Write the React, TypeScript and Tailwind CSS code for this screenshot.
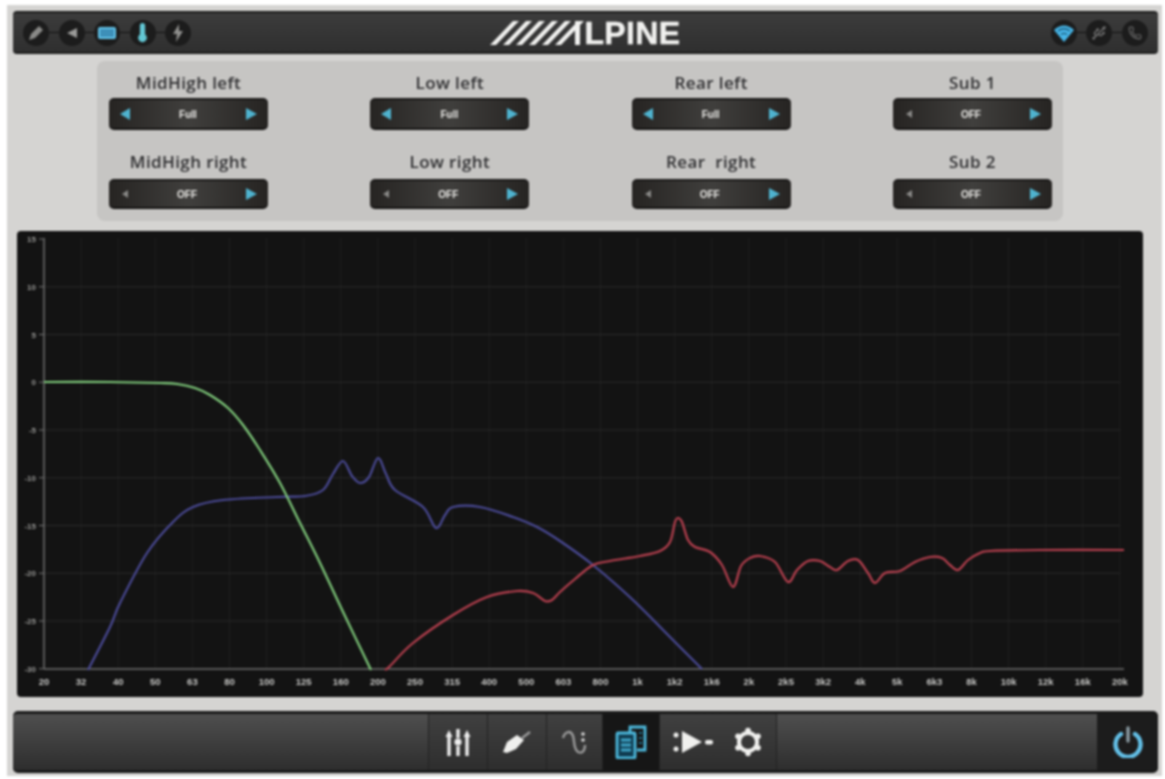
import { Phone, Thermometer, Usb } from "lucide-react"

type Pt = [number, number]

const FONT = "font-['Liberation_Sans',Arial,sans-serif]"

const channels = [
  [
    { label: "MidHigh left", value: "Full", on: true },
    { label: "MidHigh right", value: "OFF", on: false },
  ],
  [
    { label: "Low left", value: "Full", on: true },
    { label: "Low right", value: "OFF", on: false },
  ],
  [
    { label: "Rear left", value: "Full", on: true },
    { label: "Rear  right", value: "OFF", on: false },
  ],
  [
    { label: "Sub 1", value: "OFF", on: false },
    { label: "Sub 2", value: "OFF", on: false },
  ],
]

const freqs = "20 32 40 50 63 80 100 125 160 200 250 315 400 500 603 800 1k 1k2 1k6 2k 2k5 3k2 4k 5k 6k3 8k 10k 12k 16k 20k".split(" ")
const dbs = ["15", "10", "5", "0", "-5", "-10", "-15", "-20", "-25", "-30"]

// curve points, in page pixels
const green: Pt[] = [[44, 382], [110, 382], [160, 383], [177, 384], [195, 388], [210, 395], [228, 408], [243, 425], [260, 450], [280, 483], [300, 523], [320, 563], [345, 616], [371, 670]]
const blue: Pt[] = [[88, 670], [110, 627], [120, 603], [147, 553], [173, 522], [193, 507], [223, 500], [277, 497], [305, 496], [323, 490], [333, 474], [343, 461], [352, 476], [360, 483], [369, 477], [378, 458], [386, 474], [395, 490], [423, 507], [436, 528], [445, 515], [453, 507], [480, 507], [513, 517], [537, 527], [560, 541], [593, 565], [633, 600], [670, 637], [702, 669]]
const red: Pt[] = [[385, 670], [390, 666], [413, 643], [453, 615], [487, 597], [517, 591], [533, 593], [545, 601], [552, 600], [560, 592], [575, 579], [593, 565], [610, 561], [640, 556], [660, 551], [670, 542], [675, 522], [678, 518], [682, 522], [688, 540], [695, 547], [710, 552], [722, 565], [733, 587], [741, 566], [750, 558], [760, 556], [775, 562], [788, 582], [797, 570], [808, 561], [820, 561], [830, 567], [837, 570], [848, 561], [858, 560], [868, 573], [875, 583], [885, 573], [900, 571], [915, 562], [930, 557], [942, 558], [950, 565], [958, 570], [968, 560], [980, 553], [990, 551], [1040, 550], [1124, 550]]

function smooth(p: Pt[]) {
  let d = `M${p[0][0]} ${p[0][1]}`
  for (let i = 0; i < p.length - 1; i++) {
    const a = p[i - 1] ?? p[i]
    const b = p[i]
    const c = p[i + 1]
    const e = p[i + 2] ?? c
    d += `C${b[0] + (c[0] - a[0]) / 6} ${b[1] + (c[1] - a[1]) / 6} ${c[0] - (e[0] - b[0]) / 6} ${c[1] - (e[1] - b[1]) / 6} ${c[0]} ${c[1]}`
  }
  return d
}

function Selector({ value, on, tall }: { value: string; on: boolean; tall: boolean }) {
  return (
    <div
      className={`flex w-[159px] items-center justify-between rounded-[5px] border-b-2 border-t-2 border-b-[#141312] border-t-[#1a1918] bg-gradient-to-r from-[#262422] via-[#403f3d] to-[#262422] px-[11px] ${tall ? "h-[32px]" : "h-[30px]"}`}
    >
      {on ? (
        <div className="h-0 w-0 border-y-[6px] border-r-[10px] border-y-transparent border-r-[#4fb3cf]" />
      ) : (
        <div className="ml-[2px] h-0 w-0 border-y-[4px] border-r-[6px] border-y-transparent border-r-[#8a8a88]" />
      )}
      <span className={`${FONT} text-[10px] font-bold text-[#ecebe8]`}>{value}</span>
      <div className="h-0 w-0 border-y-[6px] border-l-[11px] border-y-transparent border-l-[#4fb3cf]" />
    </div>
  )
}

function Channel({ items }: { items: { label: string; value: string; on: boolean }[] }) {
  return (
    <div className="flex w-[159px] flex-col items-center">
      <div className="mb-[5px] h-[20px] whitespace-pre font-['Open_Sans',sans-serif] text-[17px] font-semibold leading-[20px] tracking-[0.4px] text-[#2f2f31]">
        {items[0].label}
      </div>
      <Selector value={items[0].value} on={items[0].on} tall />
      <div className="mb-[7px] mt-[22px] h-[20px] whitespace-pre font-['Open_Sans',sans-serif] text-[17px] font-semibold leading-[20px] tracking-[0.4px] text-[#2f2f31]">
        {items[1].label}
      </div>
      <Selector value={items[1].value} on={items[1].on} tall={false} />
    </div>
  )
}

function Dot({ children, first }: { children: React.ReactNode; first?: boolean }) {
  return (
    <>
      {!first && <div className="h-[1px] w-[9.5px] bg-[#111]" />}
      <div className="flex h-[26px] w-[26px] items-center justify-center rounded-full bg-[#1c1c1c]">{children}</div>
    </>
  )
}

function Logo() {
  return (
    <div className="flex items-center">
      <svg width="94" height="25" viewBox="0 0 94 25">
        {[0, 13, 26, 39, 52, 65].map((x) => (
          <polygon key={x} points={`${x},25 ${x + 6},25 ${x + 29},1 ${x + 23},1`} fill="#f1f1ef" />
        ))}
        <polygon points="85,1 90,1 90,25 85,25" fill="#f1f1ef" />
      </svg>
      <span className={`${FONT} text-[32px] font-bold leading-[26px] tracking-[0.4px] text-[#f1f1ef] [-webkit-text-stroke:0.5px_#f1f1ef]`}>LPINE</span>
    </div>
  )
}

function TopBar() {
  return (
    <div className="flex h-[43px] items-center justify-between rounded-[4px] border-y-2 border-b-[#1c1c1c] border-t-[#1c1c1c] bg-gradient-to-b from-[#3c3c3c] to-[#2f2f2f] pl-[10px] pr-[10px]">
      <div className="flex w-[400px] items-center">
        <Dot first>
          <svg width="18" height="18" viewBox="0 0 18 18">
            <path d="M2 16l2-6 8-8 4 4-8 8z" fill="#8a8a88" />
          </svg>
        </Dot>
        <Dot>
          <svg width="14" height="14" viewBox="0 0 14 14">
            <path d="M2 7l10-5v10z" fill="#9a9a98" />
          </svg>
        </Dot>
        <Dot>
          <div className="h-[12px] w-[18px] rounded-[2px] border-2 border-[#63c4ea] bg-[#3d8fb8]" />
        </Dot>
        <Dot>
          <Thermometer size={21} className="text-[#63c7d4]" fill="#63c7d4" />
        </Dot>
        <Dot>
          <svg width="12" height="18" viewBox="0 0 12 18">
            <path d="M7 0L1 10h4l-1 8 7-11H7z" fill="#8f8f8d" />
          </svg>
        </Dot>
      </div>
      <Logo />
      <div className="flex w-[400px] items-center justify-end">
        <Dot first>
          <svg width="22" height="18" viewBox="0 0 22 18">
            <path d="M1 6c6-6 14-6 20 0l-10 12z" fill="#46b4e6" />
            <path d="M5 7c4-3 8-3 12 0M8 10.500c2-1.500 4-1.500 6 0" fill="none" stroke="#1c5a7a" strokeWidth="1.4" />
          </svg>
        </Dot>
        <Dot>
          <Usb size={16} className="text-[#777]" />
        </Dot>
        <Dot>
          <Phone size={14} className="text-[#666]" />
        </Dot>
      </div>
    </div>
  )
}

function Chart() {
  return (
    <div className="ml-[4px] mt-[10px] h-[466px] w-[1126px] rounded-[4px] bg-[#131313]">
      <svg width="1126" height="466" viewBox="17 231 1126 466" className="block">
        {freqs.map((f, i) => {
          const x = 44 + i * 37.1
          return (
            <g key={f}>
              {i > 0 && <line x1={x} y1="238" x2={x} y2="669" stroke="#1f1f1f" strokeWidth="1" />}
              <text x={x} y="685" textAnchor="middle" fontFamily="Liberation Sans" fontSize="9.5" fontWeight="700" fill="#c8c8c6">
                {f}
              </text>
            </g>
          )
        })}
        {dbs.map((d, i) => {
          const y = 239 + i * 47.75
          return (
            <g key={d}>
              {i > 0 && i < 9 && <line x1="44" y1={y} x2="1120" y2={y} stroke="#2a2a2a" strokeWidth="1" />}
              <line x1="39" y1={y} x2="44" y2={y} stroke="#777" strokeWidth="1" />
              <text x="36" y={y + 3} textAnchor="end" fontFamily="Liberation Sans" fontSize="8" fontWeight="700" fill="#9a9a98">
                {d}
              </text>
            </g>
          )
        })}
        <line x1="44" y1="238" x2="44" y2="669" stroke="#6f6f6f" strokeWidth="1.5" />
        <line x1="44" y1="669" x2="1124" y2="669" stroke="#6f6f6f" strokeWidth="1.5" />
        <path d={smooth(blue)} fill="none" stroke="#4a4a96" strokeWidth="2.2" />
        <path d={smooth(red)} fill="none" stroke="#b8404f" strokeWidth="2.2" />
        <path d={smooth(green)} fill="none" stroke="#80cc7c" strokeWidth="2.2" />
      </svg>
    </div>
  )
}

function Cell({ children, active, w }: { children: React.ReactNode; active?: boolean; w: string }) {
  return (
    <div
      className={`flex h-full items-center justify-center border-r border-[#222] ${w} ${active ? "bg-[#161616]" : "bg-gradient-to-b from-[#404040] to-[#2e2e2e]"}`}
    >
      {children}
    </div>
  )
}

function BottomBar() {
  return (
    <div className="mt-[14px] flex h-[62px] overflow-hidden rounded-[5px] border-y-[3px] border-[#1a1a1a] bg-[#1a1a1a]">
      <div className="h-full w-[416px] border-r border-[#222] bg-gradient-to-b from-[#4f4f4f] to-[#2e2e2e]" />
      <Cell w="w-[59px]">
        <svg width="26" height="28" viewBox="0 0 26 28" fill="none" stroke="#eee" strokeWidth="3.4">
          <path d="M4 8v20M13 1v9M13 18v10M22 8v20" />
          <path d="M0.500 9L4 2l3.500 7zM18.500 9L22 2l3.500 7z" fill="#eee" stroke="none" />
          <circle cx="13" cy="14" r="3.600" fill="#eee" stroke="none" />
        </svg>
      </Cell>
      <Cell w="w-[59px]">
        <svg width="30" height="24" viewBox="0 0 30 24">
          <path d="M1 22L5 12l10-7 7 5-8 9-9 4z" fill="#f0f0ee" />
          <path d="M20 8l8-6" stroke="#999" strokeWidth="2.4" />
        </svg>
      </Cell>
      <Cell w="w-[56px]">
        <svg width="26" height="28" viewBox="0 0 26 28" fill="none" stroke="#9a9a9a" strokeWidth="2.4">
          <path d="M1 10C3 3 9 2 11 8c2 6 0 12 5 16 4 2 7-1 7-7" />
          <circle cx="21" cy="6" r="1.800" fill="#ddd" stroke="none" />
          <circle cx="21" cy="12" r="1.800" fill="#ddd" stroke="none" />
        </svg>
      </Cell>
      <Cell w="w-[57px]" active>
        <svg width="32" height="34" viewBox="0 0 32 34" fill="none" stroke="#4cb8dc" strokeWidth="2.800">
          <path d="M15 7V2h15v23h-8" />
          <rect x="2" y="8" width="18" height="25" rx="1" fill="#0f3a4e" />
          <path d="M6 15h10M6 20h10M6 25h10" stroke="#3ea4c6" />
          <path d="M24 8h3M24 13h3M24 18h3" strokeWidth="2" stroke="#1f6d88" />
        </svg>
      </Cell>
      <Cell w="w-[117px]">
        <div className="flex items-center gap-[20px]">
          <svg width="40" height="24" viewBox="0 0 40 24" fill="#f0f0ee">
            <circle cx="3" cy="5" r="2.500" />
            <circle cx="3" cy="19" r="2.500" />
            <path d="M9 1l20 11L9 23z" />
            <rect x="32" y="10" width="8" height="4.500" rx="2" />
          </svg>
          <svg width="30" height="30" viewBox="0 0 30 30" fill="none" stroke="#f0f0ee">
            <circle cx="15" cy="15" r="9" strokeWidth="4" />
            <g fill="#f0f0ee" stroke="none">
              <circle cx="15" cy="3.500" r="2.800" />
              <circle cx="15" cy="26.500" r="2.800" />
              <circle cx="5" cy="9.200" r="2.800" />
              <circle cx="25" cy="9.200" r="2.800" />
              <circle cx="5" cy="20.800" r="2.800" />
              <circle cx="25" cy="20.800" r="2.800" />
            </g>
          </svg>
        </div>
      </Cell>
      <div className="h-full flex-1 bg-gradient-to-b from-[#4f4f4f] to-[#2e2e2e]" />
      <div className="flex h-full w-[61px] items-center justify-center bg-[#1c1c1c]">
        <svg width="30" height="32" viewBox="0 0 30 32" fill="none" stroke="#63bfe6">
          <path d="M8 8a12.500 12.500 0 1 0 14 0" strokeWidth="4.400" strokeLinecap="round" />
          <path d="M15 2v13" strokeWidth="3.400" strokeLinecap="round" stroke="#8a9aa2" />
        </svg>
      </div>
    </div>
  )
}

export default function App() {
  return (
    <div className="h-[779px] w-[1165px] overflow-hidden bg-white blur-[0.8px]">
      <div className="ml-[7px] h-[771px] w-[1155px] translate-y-[5px] bg-[#d5d4d2] pl-[6px] pr-[4px] pt-[6px]">
        <TopBar />
        <div className="ml-[84px] mt-[7px] flex h-[160px] w-[966px] justify-between rounded-[8px] bg-[#c6c5c3] pl-[12px] pr-[11px] pt-[12px]">
          {channels.map((items) => (
            <Channel key={items[0].label} items={items} />
          ))}
        </div>
        <Chart />
        <BottomBar />
      </div>
    </div>
  )
}
